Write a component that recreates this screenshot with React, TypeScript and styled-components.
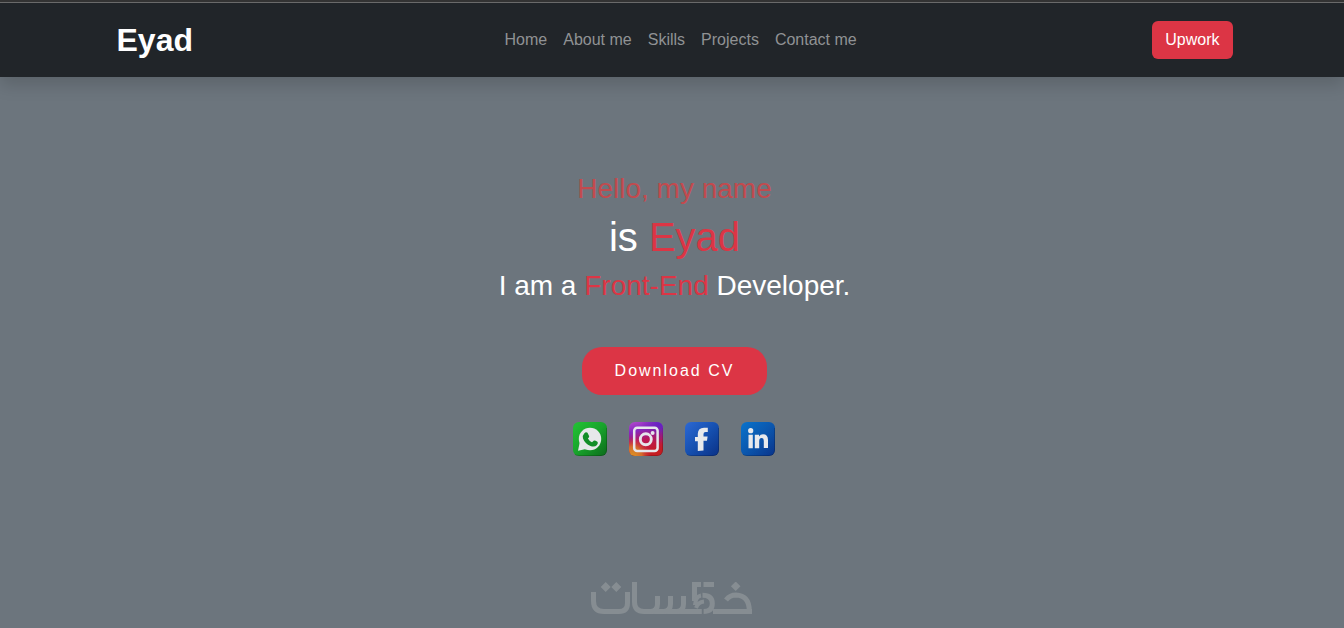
import React from "react";
import styled, { createGlobalStyle } from "styled-components";

const GlobalStyle = createGlobalStyle`
  *, *::before, *::after { box-sizing: border-box; }
  body {
    margin: 0;
    background: #6c757d;
    color: #fff;
    font-family: "Liberation Sans", Arial, sans-serif;
    font-size: 16px;
    line-height: 24px;
  }
  a { color: inherit; text-decoration: none; }
`;

const Page = styled.div`
  min-height: 100vh;
  display: flex;
  flex-direction: column;
  overflow: hidden;
`;

const Header = styled.header`
  border-top: 2px solid #333;
  background: #212529;
  box-shadow: 0 8px 16px rgba(0, 0, 0, 0.15);
`;

const Navbar = styled.nav`
  border-top: 1px solid #6a6a6a;
  padding: 8px 0 8px 5px;
`;

const Container = styled.div`
  max-width: 1140px;
  min-height: 58px;
  margin: 0 auto;
  padding: 0 12px;
  display: flex;
  align-items: center;
  justify-content: space-between;
`;

const Brand = styled.a`
  margin-right: 16px;
  font-size: 32px;
  line-height: 48px;
  font-weight: 700;
`;

const NavList = styled.ul`
  display: flex;
  margin: 0;
  padding: 0;
  list-style: none;
`;

const NavLink = styled.a`
  display: block;
  padding: 8px;
  color: #909294;
`;

const UpworkButton = styled.button`
  height: 38px;
  padding: 0 13px;
  border: 0;
  border-radius: 6px;
  background: #dc3545;
  color: #fff;
  font: inherit;
`;

const Hero = styled.main`
  flex: 1;
  display: flex;
  flex-direction: column;
  align-items: center;
  padding: 95px 0 0 5px;
`;

const Greeting = styled.p`
  margin: 0 0 8px;
  color: #c24a4e;
  font-size: 28px;
  line-height: 33px;
`;

const Name = styled.h1`
  margin: 0 0 8px;
  font-size: 40px;
  line-height: 48px;
  font-weight: 400;
`;

const Role = styled.h2`
  margin: 0;
  font-size: 28px;
  line-height: 33px;
  font-weight: 400;
`;

const Accent = styled.span`
  color: #dc3545;
`;

const DownloadButton = styled.button`
  height: 48px;
  margin-top: 45px;
  padding: 0 33px;
  border: 0;
  border-radius: 20px;
  background: #dc3545;
  color: #fff;
  font: inherit;
  letter-spacing: 2px;
`;

const Socials = styled.div`
  display: flex;
  gap: 20px;
  margin-top: 26px;
`;

const SocialLink = styled.a`
  display: block;
  width: 36px;
  height: 36px;

  svg { display: block; }
`;

const Watermark = styled.footer`
  display: flex;
  justify-content: center;
  padding-bottom: 12px;

  svg { display: block; }
`;

const Tile = ({ fill }: { fill: string }) => (
  <>
    <rect x="1" y="1" width="34" height="34" rx="6" fill={fill} />
    <path d="M3 33.5Q4 34.5 7 34.5H29Q34.5 34.5 34.5 29V7" fill="none" stroke="#000" strokeOpacity=".18" />
  </>
);

const WhatsAppIcon = () => (
  <svg width="36" height="36" viewBox="1 0 36 36" aria-hidden="true">
    <defs>
      <linearGradient id="wa" x1="0" y1="0" x2="1" y2="1">
        <stop offset="0" stopColor="#22c435" />
        <stop offset=".5" stopColor="#18a32b" />
        <stop offset="1" stopColor="#0b6a1b" />
      </linearGradient>
    </defs>
    <Tile fill="url(#wa)" />
    <circle cx="18" cy="18" r="11.2" fill="#e6e8ea" />
    <path d="M6 29.8L7.600 22L14 28Z" fill="#e6e8ea" />
    <path d="M12.200 12.500Q14 10.300 15.500 11.800L17.200 15.200Q17.400 16.300 15.900 17.500Q17.200 20 20 21.300L22 19.600Q23 19.200 25.400 20.800Q26.600 21.800 25 24Q22.500 26.500 18.500 25Q13 22.800 11 17.500Q10.200 14.500 12.200 12.500Z" fill="#128e28" />
  </svg>
);

const InstagramIcon = () => (
  <svg width="36" height="36" viewBox="1 0 36 36" aria-hidden="true">
    <defs>
      <linearGradient id="ig" x1="0" y1="0" x2=".3" y2="1">
        <stop offset="0" stopColor="#b44ccc" />
        <stop offset=".3" stopColor="#8528c0" />
        <stop offset=".6" stopColor="#b91858" />
        <stop offset="1" stopColor="#c51c22" />
      </linearGradient>
      <radialGradient id="igWarm" cx=".1" cy="1" r=".55">
        <stop offset="0" stopColor="#dc9424" />
        <stop offset=".5" stopColor="#d46c2c" />
        <stop offset="1" stopColor="#d02a40" stopOpacity="0" />
      </radialGradient>
      <radialGradient id="igCool" cx="1" cy="0" r=".65">
        <stop offset="0" stopColor="#5b22c8" />
        <stop offset="1" stopColor="#6a20b8" stopOpacity="0" />
      </radialGradient>
    </defs>
    <Tile fill="url(#ig)" />
    <rect x="1" y="1" width="34" height="34" rx="6" fill="url(#igCool)" />
    <rect x="1" y="1" width="34" height="34" rx="6" fill="url(#igWarm)" />
    <rect x="6.200" y="6.700" width="23.400" height="23.400" rx="3" fill="none" stroke="#e6e6ec" strokeWidth="2.500" />
    <circle cx="17.8" cy="18.300" r="5.500" fill="none" stroke="#e6e6ec" strokeWidth="2.900" />
    <circle cx="24.6" cy="11.9" r="2" fill="#e6e6ec" />
  </svg>
);

const FacebookIcon = () => (
  <svg width="36" height="36" viewBox="1 0 36 36" aria-hidden="true">
    <defs>
      <linearGradient id="fb" x1="0" y1="0" x2="1" y2="1">
        <stop offset="0" stopColor="#2d69d4" />
        <stop offset=".5" stopColor="#1650b0" />
        <stop offset="1" stopColor="#0a3186" />
      </linearGradient>
    </defs>
    <Tile fill="url(#fb)" />
    <path d="M13.800 30V20.200H11V16H13.800V12.800Q14 6.700 20 6.700H23.800V11H21.500Q19.500 11 19.500 13V15.600H23.600L23 19.800H19.500V29.600Z" fill="#e8e9ec" />
  </svg>
);

const LinkedInIcon = () => (
  <svg width="36" height="36" viewBox="1 0 36 36" aria-hidden="true">
    <defs>
      <linearGradient id="li" x1="0" y1="0" x2="1" y2="1">
        <stop offset="0" stopColor="#0873cc" />
        <stop offset=".5" stopColor="#0b57ae" />
        <stop offset="1" stopColor="#09338a" />
      </linearGradient>
    </defs>
    <Tile fill="url(#li)" />
    <circle cx="10.700" cy="9.700" r="2.600" fill="#e8e9ec" />
    <path d="M8.500 13.700H12.800V27.200H8.500ZM14.800 13.700H19V15.500Q20.300 13.300 23 13.300Q28 13.300 28 19V27H23.800V20Q23.800 17 21.600 17Q19.200 17 19.200 20.300V27.200H14.800Z" fill="#e8e9ec" />
  </svg>
);

const KhamsatLogo = () => (
  <svg width="162" height="34" viewBox="0 0 162 34" role="img" aria-label="خمسات">
    <g fill="none" stroke="#868d92" strokeWidth="5">
      <path d="M2.500 10V19Q2.500 29.500 13 29.500H28Q36.500 29.500 36.500 21V10" />
      <path d="M43.500 0V20Q43.500 29.500 53 29.500H111" />
      <path d="M66.500 14V22Q66.500 29 60 29.500M79.500 14V22Q79.500 29 73 29.500M92.500 14V22Q92.500 29 86 29.500" />
      <path d="M103.500 19V2.500H110M112.500 2.500H123" />
      <path d="M111.500 13.300Q121.300 13.300 121.300 21.500Q121.300 29.500 112.500 29.500" />
      <path d="M104 23Q104.500 14.500 110 13.500M105 26Q107 20 113 19.500" strokeWidth="4" />
      <path d="M122 29.500H161M135 18Q139 13 145 13Q158.300 13.500 158.300 29" />
    </g>
    <g fill="#868d92">
      <path d="M14.700 0L19.700 5L14.700 10L9.700 5ZM25.300 0L30.300 5L25.300 10L20.300 5ZM144.700 -0.500L149.500 4.300L144.700 9.100L139.900 4.300Z" />
    </g>
    <path d="M111.500 24V34" stroke="#6c757d" strokeWidth="1.500" />
  </svg>
);

const links = [
  ["Home", "#home"],
  ["About me", "#about"],
  ["Skills", "#skills"],
  ["Projects", "#projects"],
  ["Contact me", "#contact"],
];

const socials = [
  { name: "WhatsApp", Icon: WhatsAppIcon },
  { name: "Instagram", Icon: InstagramIcon },
  { name: "Facebook", Icon: FacebookIcon },
  { name: "LinkedIn", Icon: LinkedInIcon },
];

export default function App() {
  return (
    <Page>
      <GlobalStyle />
      <Header>
        <Navbar>
          <Container>
            <Brand href="#home">Eyad</Brand>
            <NavList>
              {links.map(([label, href]) => (
                <li key={label}><NavLink href={href}>{label}</NavLink></li>
              ))}
            </NavList>
            <UpworkButton type="button">Upwork</UpworkButton>
          </Container>
        </Navbar>
      </Header>
      <Hero id="home">
        <Greeting>Hello, my name</Greeting>
        <Name>is <Accent>Eyad</Accent></Name>
        <Role>I am a <Accent>Front-End</Accent> Developer.</Role>
        <DownloadButton type="button">Download CV</DownloadButton>
        <Socials>
          {socials.map(({ name, Icon }) => (
            <SocialLink key={name} href={`#${name.toLowerCase()}`} aria-label={name}><Icon /></SocialLink>
          ))}
        </Socials>
      </Hero>
      <Watermark><KhamsatLogo /></Watermark>
    </Page>
  );
}
